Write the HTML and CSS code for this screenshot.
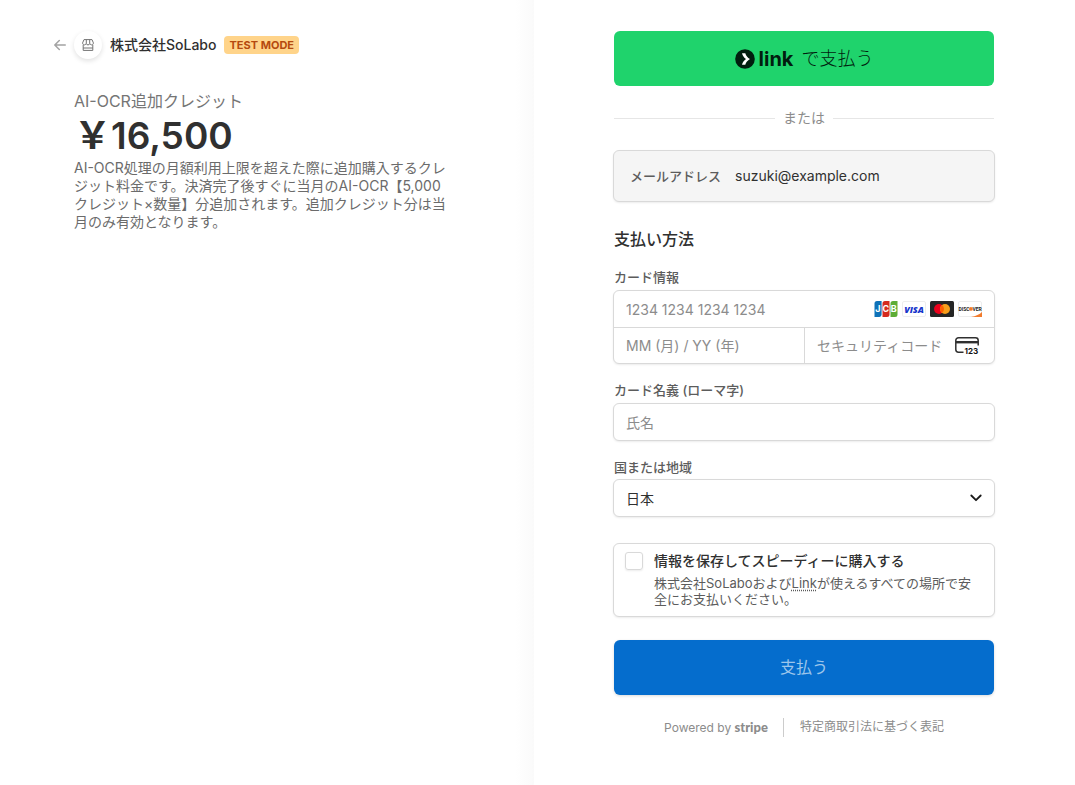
FILE: index.html
```html
<!DOCTYPE html>
<html lang="ja">
<head>
<meta charset="utf-8">
<meta name="viewport" content="width=device-width, initial-scale=1">
<title>株式会社SoLabo</title>
<link rel="stylesheet" href="styles.css">
</head>
<body>
<div class="checkout">
  <section class="overview">
    <div class="overview-content">
      <header class="business">
        <a class="back" href="#" aria-label="戻る">
          <svg width="12" height="12" viewBox="0 0 12 12" fill="none" stroke="#a3a3a3" stroke-width="1.5" stroke-linecap="round" stroke-linejoin="round"><path d="M5.3 1.5.8 6l4.5 4.5M1 6h10.3"/></svg>
        </a>
        <span class="business-icon">
          <svg width="12" height="12" viewBox="0 0 12 12" fill="none" stroke="#737373"><path d="M2 .6h8l1.400 3.300c0 1.400-.8 2-1.800 2S8 5.200 7.800 4.600C7.500 5.500 6.900 5.900 6 5.900s-1.500-.4-1.800-1.300C4 5.200 3.400 5.900 2.400 5.900S.6 5.300.6 3.900ZM4.300.6v4M7.700.6v4M1.200 6v5.400h9.600V6M1.200 9h9.600"/></svg>
        </span>
        <a class="business-name" href="#">株式会社SoLabo</a>
        <span class="badge">TEST MODE</span>
      </header>
      <h1 class="product">AI-OCR追加クレジット</h1>
      <p class="price">￥16,500</p>
      <p class="description">AI-OCR処理の月額利用上限を超えた際に追加購入するクレジット料金です。決済完了後すぐに当月のAI-OCR【5,000クレジット×数量】分追加されます。追加クレジット分は当月のみ有効となります。</p>
    </div>
  </section>
  <main class="payment">
    <form class="payment-form">
      <button class="button link-button" type="button">
        <svg width="20" height="20" viewBox="0 0 20 20"><circle cx="10" cy="10" r="9.800" fill="#011e0f"/><path d="M7 4.200h3.300c.6 2.400 2.300 4.400 4.700 5.800-2.400 1.400-4.100 3.400-4.700 5.800H7c.6-2.500 2-4.400 4-5.800-2-1.400-3.400-3.300-4-5.800Z" fill="#fff"/></svg>
        <span class="link-word">link</span>
        <span class="link-text">で支払う</span>
      </button>
      <div class="divider">または</div>
      <div class="field email">
        <label for="email">メールアドレス</label>
        <input id="email" type="email" value="suzuki@example.com" readonly>
      </div>
      <h2 class="section-title">支払い方法</h2>
      <label class="label" for="card">カード情報</label>
      <div class="field card">
        <div class="card-row">
          <input id="card" type="text" placeholder="1234 1234 1234 1234">
          <span class="brands">
            <svg width="24" height="16" viewBox="0 0 24 16" role="img" aria-label="JCB"><path d="M3 0h4.600v13.500A2.500 2.500 0 0 1 5 16H.5V2.500Q.5 0 3 0Z" fill="#0e72b8"/><path d="M11 0h4.500v13.500A2.500 2.500 0 0 1 13 16H8.500V2.500Q8.500 0 11 0Z" fill="#d42a1e"/><path d="M19 0h4.500v13.500A2.500 2.500 0 0 1 21 16h-4.500V2.500Q16.500 0 19 0Z" fill="#5dad36"/><g class="jcb-text"><text x="1.200" y="11">J</text><text x="8.500" y="11">C</text><text x="16.700" y="11">B</text></g></svg>
            <svg width="24" height="16" viewBox="0 0 24 16" role="img" aria-label="Visa"><rect x=".5" y=".5" width="23" height="15" rx="1.500" fill="#fff" stroke="#ededed"/><text class="visa-text" x="12" y="11.500">VISA</text></svg>
            <svg width="24" height="16" viewBox="0 0 24 16" role="img" aria-label="Mastercard"><rect width="24" height="16" rx="1.500" fill="#252525"/><circle cx="9" cy="8" r="5" fill="#eb001b"/><circle cx="15" cy="8" r="5" fill="#f79e1b"/><path d="M12 4a5 5 0 0 1 0 8 5 5 0 0 1 0-8Z" fill="#ff5f00"/></svg>
            <svg width="24" height="16" viewBox="0 0 24 16" role="img" aria-label="Discover"><rect x=".5" y=".5" width="23" height="15" rx="1.500" fill="#fff" stroke="#ededed"/><path d="M24 11v5H13c5-1 8.500-2.500 11-5Z" fill="#f27b2c"/><g class="discover-text"><text x=".5" y="9.700">DISC</text><text x="14.500" y="9.700">VER</text></g><circle cx="12.900" cy="7.900" r="1.900" fill="#f27b2c"/></svg>
          </span>
        </div>
        <div class="card-row card-row-split">
          <input type="text" placeholder="MM (月) / YY (年)" aria-label="有効期限">
          <span class="cvc">
            <input type="text" placeholder="セキュリティコード" aria-label="セキュリティコード">
            <svg width="25" height="17" viewBox="0 0 25 17" fill="none"><path d="M8.500 15.300H3.500A2.700 2.700 0 0 1 .8 12.600V3.500A2.700 2.700 0 0 1 3.500.8h17a2.700 2.700 0 0 1 2.700 2.700v5" stroke="#303030" stroke-width="1.500"/><path d="M1 5.200h22" stroke="#303030" stroke-width="2.400"/><text class="cvc-text" x="9.500" y="16.500">123</text></svg>
          </span>
        </div>
      </div>
      <label class="label" for="name">カード名義 (ローマ字)</label>
      <input class="field control" id="name" type="text" placeholder="氏名">
      <label class="label" for="country">国または地域</label>
      <div class="select-wrap">
        <select class="field control" id="country"><option>日本</option></select>
        <svg class="chevron" width="12" height="8" viewBox="0 0 12 8" fill="none" stroke="#1a1a1a" stroke-width="1.800" stroke-linecap="round" stroke-linejoin="round"><path d="m1.300 1.500 4.700 4.700 4.700-4.700"/></svg>
      </div>
      <div class="field save">
        <input id="save" type="checkbox">
        <div>
          <label class="save-title" for="save">情報を保存してスピーディーに購入する</label>
          <p class="save-text">株式会社SoLaboおよび<a href="#">Link</a>が使えるすべての場所で安全にお支払いください。</p>
        </div>
      </div>
      <button class="button pay-button" type="submit">支払う</button>
      <footer class="footer">
        <a class="powered" href="#">Powered by <span class="stripe">stripe</span></a>
        <a class="legal" href="#">特定商取引法に基づく表記</a>
      </footer>
    </form>
  </main>
</div>
</body>
</html>
```

FILE: styles.css
```css
* { box-sizing: border-box; }

body {
  margin: 0;
  background: #fff;
  color: #303030;
  font-family: Inter, "Noto Sans CJK JP", sans-serif;
  font-size: 14px;
}

h1, h2, p { margin: 0; }
a { color: inherit; text-decoration: none; }
svg { display: block; flex: none; }
input, select, button { font: inherit; color: inherit; }

.checkout {
  display: grid;
  grid-template-columns: 1fr 1fr;
  min-height: 100vh;
  padding-right: 7px;
}

.overview {
  display: flex;
  justify-content: flex-end;
  padding: 28px 80px 32px 32px;
  background: linear-gradient(to left, #fafafa, #fff 18px);
}

.overview-content, .payment-form { width: 100%; max-width: 380px; }

/* Business header */
.business {
  display: flex;
  align-items: center;
  height: 34px;
  margin: 0 0 27px -20px;
}
.business-icon {
  display: grid;
  place-items: center;
  width: 28px;
  height: 28px;
  margin: 0 8px;
  border-radius: 50%;
  box-shadow: 0 2px 5px rgba(0, 0, 0, .12);
}
.business-name { font-weight: 500; line-height: 18px; }
.badge {
  margin-left: 8px;
  padding: 0 5px;
  border-radius: 4px;
  background: #ffd48a;
  color: #b54a0f;
  font-size: 11px;
  font-weight: 700;
  line-height: 18px;
}

.product { color: #757575; font-size: 16px; font-weight: 400; line-height: 24px; }
.price { font-size: 37px; font-weight: 600; line-height: 46px; }
.description { color: #6b6b6b; line-height: 18px; }

/* Payment column */
.payment { padding: 31px 32px 32px 80px; }
.payment-form { display: flex; flex-direction: column; }

.button {
  height: 55px;
  border: 0;
  border-radius: 6px;
  cursor: pointer;
}
.link-button {
  display: flex;
  align-items: center;
  justify-content: center;
  background: #1fd36c;
  color: #011e0f;
}
.link-word { margin: 0 8px 0 4px; font-size: 20px; font-weight: 700; }
.link-text { padding-bottom: 4px; font-size: 18px; font-weight: 300; }

.divider {
  display: flex;
  align-items: center;
  gap: 8px;
  margin: 20px 0;
  color: #8c8c8c;
  line-height: 24px;
}
.divider::before, .divider::after { content: ""; flex: 1; border-top: 1px solid #e6e6e6; }

.field {
  margin: 0 -1px;
  border: 1px solid #d9d9d9;
  border-radius: 6px;
  background: #fff;
  box-shadow: 0 1px 2px rgba(0, 0, 0, .08);
}
.email {
  display: flex;
  align-items: center;
  gap: 14px;
  height: 52px;
  padding: 0 16px 2px;
  background: #f5f5f5;
}
.email label { color: #5c5c5c; font-size: 13px; font-weight: 500; }
.email input { flex: 1; min-width: 0; padding: 0; border: 0; background: none; }

.section-title { margin: 25px 0 17px; font-size: 16px; font-weight: 500; line-height: 24px; }
.label { margin-bottom: 4px; color: #5c5c5c; font-size: 13px; font-weight: 500; line-height: 18px; }

.card { height: 74px; margin-bottom: 17px; }
.card-row { display: flex; align-items: center; height: 36px; padding-right: 12px; }
.card input {
  flex: 1;
  min-width: 0;
  height: 100%;
  padding: 0 12px;
  border: 0;
  background: none;
}
input::placeholder { color: #8c8c8c; opacity: 1; }
.brands { display: flex; gap: 4px; }
.card .card-row-split {
  display: grid;
  grid-template-columns: minmax(0, 1fr) minmax(0, 1fr);
  padding: 0;
  border-top: 1px solid #d9d9d9;
}
.card-row-split input { width: 100%; }
.cvc {
  display: flex;
  align-items: center;
  height: 100%;
  padding-right: 14px;
  border-left: 1px solid #d9d9d9;
}
.cvc input { padding-right: 0; }

.control { height: 38px; padding: 0 12px; margin-bottom: 17px; }
.select-wrap { display: grid; align-items: center; margin: -1px -1px 26px; }
.select-wrap > * { grid-area: 1 / 1; }
.select-wrap .control { width: 100%; margin: 0; appearance: none; }
.chevron { justify-self: end; margin-right: 13px; pointer-events: none; }

.save { display: flex; gap: 11px; padding: 8px 12px 9px 11px; margin-bottom: 23px; }
.save input {
  flex: none;
  appearance: none;
  width: 18px;
  height: 18px;
  margin: 0;
  border: 1px solid #d9d9d9;
  border-radius: 3px;
  box-shadow: 0 1px 2px rgba(0, 0, 0, .08);
}
.save-title { display: block; font-weight: 500; line-height: 18px; }
.save-text { margin-top: 5px; color: #5c5c5c; font-size: 13px; line-height: 16px; }
.save-text a { text-decoration: underline dotted; text-underline-offset: 2px; }

.pay-button {
  padding-bottom: 4px;
  background: #056dcd;
  color: #9dc6eb;
  font-size: 16px;
  box-shadow: 0 1px 3px rgba(0, 0, 0, .15);
}

.footer {
  display: flex;
  justify-content: center;
  margin-top: 23px;
  color: #8c8c8c;
  font-size: 12px;
  line-height: 18px;
}
.powered { padding-right: 15px; }
.legal { padding-left: 16px; border-left: 1px solid #ccc; }
.stripe { font-family: Lato, sans-serif; font-size: 13px; font-weight: 900; }

/* Text inside payment marks */
.jcb-text { fill: #fff; font: 700 9px Inter, sans-serif; }
.visa-text { fill: #1434cb; font: italic 800 9px "Open Sans", sans-serif; text-anchor: middle; }
.discover-text { fill: #222; font: 700 5px Roboto, sans-serif; }
.cvc-text { fill: #111; font: 700 8px Inter, sans-serif; }
```
